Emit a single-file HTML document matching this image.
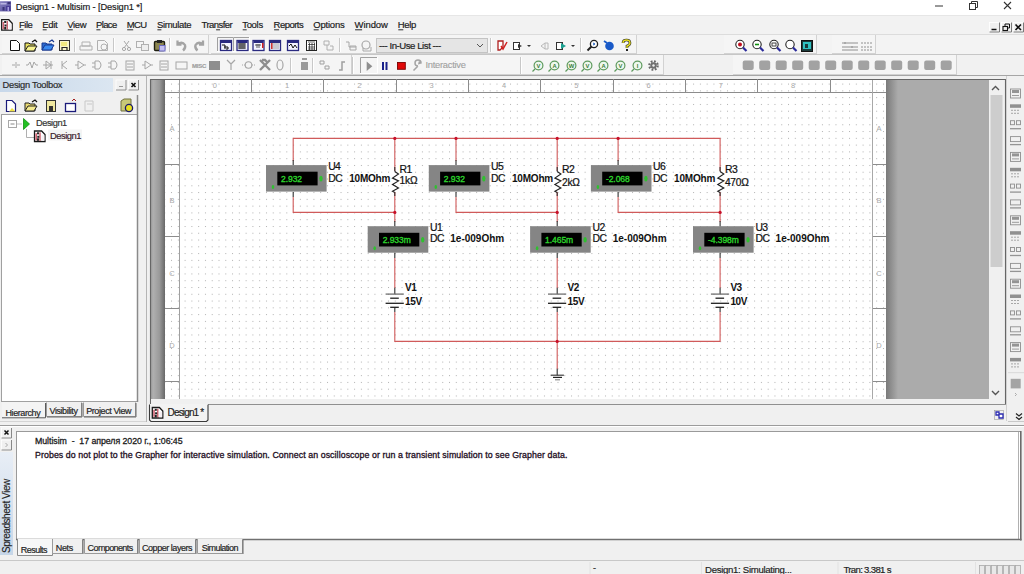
<!DOCTYPE html>
<html><head><meta charset="utf-8">
<style>
*{margin:0;padding:0}
html,body{width:1024px;height:574px;overflow:hidden;background:#f0f0f0;font-family:"Liberation Sans",sans-serif}
svg{position:absolute;left:0;top:0;display:block}
</style></head><body>
<svg width="1024" height="574" viewBox="0 0 1024 574" font-family="Liberation Sans, sans-serif">
<rect x="0" y="0" width="1024" height="574" fill="#f0f0f0" />
<rect x="0" y="0" width="1024" height="15" fill="#ffffff" />
<rect x="0" y="15" width="1024" height="1" fill="#e6e6e6" />
<rect x="0" y="16" width="1024" height="18" fill="#f2f2f2" />
<rect x="0" y="34" width="1024" height="1" fill="#dcdcdc" />
<rect x="0" y="35" width="1024" height="19" fill="#f3f3f3" />
<rect x="0" y="54" width="1024" height="1" fill="#c6c6c6" />
<rect x="0" y="55" width="1024" height="20" fill="#f1f1f1" />
<rect x="0" y="75" width="1024" height="1" fill="#a6a6a6" />
<defs><linearGradient id="ti" x1="0" y1="0" x2="1" y2="1"><stop offset="0" stop-color="#8c86c4"/><stop offset="1" stop-color="#4c4694"/></linearGradient><linearGradient id="hdr" x1="0" y1="0" x2="1" y2="0"><stop offset="0" stop-color="#c8d8ea"/><stop offset="1" stop-color="#dbe6f1"/></linearGradient><linearGradient id="sv" x1="0" y1="0" x2="0" y2="1"><stop offset="0" stop-color="#e8eef6"/><stop offset="1" stop-color="#c6d6e8"/></linearGradient><linearGradient id="cg" x1="0" y1="0" x2="1" y2="0"><stop offset="0" stop-color="#9c9c9c"/><stop offset="0.15" stop-color="#b0b0b0"/><stop offset="0.6" stop-color="#9a9a9a"/><stop offset="1" stop-color="#686868"/></linearGradient><linearGradient id="gs" x1="0" y1="0" x2="1" y2="0"><stop offset="0" stop-color="#7a7a7a"/><stop offset="1" stop-color="#ababab"/></linearGradient></defs>
<rect x="0" y="1.2" width="11" height="10.2" fill="url(#ti)" />
<rect x="0.5" y="3" width="6" height="1.5" fill="#b8b4e0" />
<rect x="7.5" y="2" width="3" height="2" fill="#3a3478" />
<rect x="6" y="6" width="4.5" height="5" fill="#4a3e98" />
<rect x="7.5" y="7" width="1.5" height="4" fill="#a8a0e0" />
<rect x="2.5" y="7" width="2" height="3.5" fill="#3a3478" />
<text x="15.8" y="10.3" font-size="9.3" fill="#1a1a1a" letter-spacing="-0.12" font-weight="normal" text-anchor="start" stroke="#1a1a1a" stroke-width="0.18" >Design1 - Multisim - [Design1 *]</text>
<line x1="935" y1="6" x2="943" y2="6" stroke="#333" stroke-width="1" />
<rect x="969.5" y="3.5" width="6" height="6" fill="none" stroke="#333" stroke-width="1"/>
<path d="M971.5 3.5 V1.5 H977.5 V7.5 H975.5" fill="none" stroke="#333" stroke-width="1"/>
<path d="M1004 2 L1011 9 M1011 2 L1004 9" stroke="#333" stroke-width="1.1"/>
<path d="M1.7 19.7 H8.8 L12.2 23.2 V30.2 H1.7 Z" fill="#fff" stroke="#1a1a1a" stroke-width="1.3"/><rect x="2.6" y="22" width="1.6" height="7" fill="#d06070"/><rect x="6.6" y="21" width="1.2" height="8.5" fill="#c04050"/><rect x="4.2" y="21" width="2" height="2" fill="#222"/><rect x="4.5" y="24.5" width="2" height="2" fill="#222"/><rect x="4.2" y="27" width="2" height="2.5" fill="#222"/><rect x="8.6" y="24" width="3" height="5.5" fill="#f6f0f4"/>
<text x="19.0" y="28.4" font-size="9.5" fill="#1a1a1a" letter-spacing="-0.5" font-weight="normal" text-anchor="start" stroke="#1a1a1a" stroke-width="0.18" >File</text>
<line x1="19.5" y1="29.8" x2="23.5" y2="29.8" stroke="#1a1a1a" stroke-width="0.9" />
<text x="42.2" y="28.4" font-size="9.5" fill="#1a1a1a" letter-spacing="-0.34" font-weight="normal" text-anchor="start" stroke="#1a1a1a" stroke-width="0.18" >Edit</text>
<line x1="42.7" y1="29.8" x2="46.7" y2="29.8" stroke="#1a1a1a" stroke-width="0.9" />
<text x="67.3" y="28.4" font-size="9.5" fill="#1a1a1a" letter-spacing="-0.4" font-weight="normal" text-anchor="start" stroke="#1a1a1a" stroke-width="0.18" >View</text>
<line x1="67.8" y1="29.8" x2="72.8" y2="29.8" stroke="#1a1a1a" stroke-width="0.9" />
<text x="95.9" y="28.4" font-size="9.5" fill="#1a1a1a" letter-spacing="-0.59" font-weight="normal" text-anchor="start" stroke="#1a1a1a" stroke-width="0.18" >Place</text>
<line x1="96.4" y1="29.8" x2="100.4" y2="29.8" stroke="#1a1a1a" stroke-width="0.9" />
<text x="126.7" y="28.4" font-size="9.5" fill="#1a1a1a" letter-spacing="-0.61" font-weight="normal" text-anchor="start" stroke="#1a1a1a" stroke-width="0.18" >MCU</text>
<line x1="127.2" y1="29.8" x2="133.2" y2="29.8" stroke="#1a1a1a" stroke-width="0.9" />
<text x="156.9" y="28.4" font-size="9.5" fill="#1a1a1a" letter-spacing="-0.32" font-weight="normal" text-anchor="start" stroke="#1a1a1a" stroke-width="0.18" >Simulate</text>
<line x1="157.4" y1="29.8" x2="161.4" y2="29.8" stroke="#1a1a1a" stroke-width="0.9" />
<text x="201.6" y="28.4" font-size="9.5" fill="#1a1a1a" letter-spacing="-0.55" font-weight="normal" text-anchor="start" stroke="#1a1a1a" stroke-width="0.18" >Transfer</text>
<line x1="216.1" y1="29.8" x2="220.1" y2="29.8" stroke="#1a1a1a" stroke-width="0.9" />
<text x="242.2" y="28.4" font-size="9.5" fill="#1a1a1a" letter-spacing="-0.31" font-weight="normal" text-anchor="start" stroke="#1a1a1a" stroke-width="0.18" >Tools</text>
<line x1="242.7" y1="29.8" x2="246.7" y2="29.8" stroke="#1a1a1a" stroke-width="0.9" />
<text x="273.6" y="28.4" font-size="9.5" fill="#1a1a1a" letter-spacing="-0.52" font-weight="normal" text-anchor="start" stroke="#1a1a1a" stroke-width="0.18" >Reports</text>
<line x1="274.1" y1="29.8" x2="279.1" y2="29.8" stroke="#1a1a1a" stroke-width="0.9" />
<text x="313.2" y="28.4" font-size="9.5" fill="#1a1a1a" letter-spacing="-0.19" font-weight="normal" text-anchor="start" stroke="#1a1a1a" stroke-width="0.18" >Options</text>
<line x1="313.7" y1="29.8" x2="318.7" y2="29.8" stroke="#1a1a1a" stroke-width="0.9" />
<text x="354.6" y="28.4" font-size="9.5" fill="#1a1a1a" letter-spacing="-0.1" font-weight="normal" text-anchor="start" stroke="#1a1a1a" stroke-width="0.18" >Window</text>
<line x1="355.1" y1="29.8" x2="362.1" y2="29.8" stroke="#1a1a1a" stroke-width="0.9" />
<text x="397.8" y="28.4" font-size="9.5" fill="#1a1a1a" letter-spacing="-0.31" font-weight="normal" text-anchor="start" stroke="#1a1a1a" stroke-width="0.18" >Help</text>
<line x1="398.3" y1="29.8" x2="403.3" y2="29.8" stroke="#1a1a1a" stroke-width="0.9" />
<rect x="989.5" y="22.5" width="10" height="9.5" fill="#f0f0f0" stroke="#fff" stroke-width="0.8"/>
<path d="M999.5 22.5 V32 H989.5" stroke="#7a7a7a" stroke-width="1" fill="none"/>
<line x1="991.5" y1="29.5" x2="996.5" y2="29.5" stroke="#111" stroke-width="1.5" />
<rect x="1001.5" y="22.5" width="10" height="9.5" fill="#f0f0f0" stroke="#fff" stroke-width="0.8"/>
<path d="M1011.5 22.5 V32 H1001.5" stroke="#7a7a7a" stroke-width="1" fill="none"/>
<path d="M1005.0 26 V24 H1009.5 V28 H1008.0" fill="none" stroke="#111" stroke-width="1"/>
<rect x="1003.0" y="26.5" width="4.5" height="4" fill="none" stroke="#111" stroke-width="1.1"/>
<rect x="1013.5" y="22.5" width="10" height="9.5" fill="#f0f0f0" stroke="#fff" stroke-width="0.8"/>
<path d="M1023.5 22.5 V32 H1013.5" stroke="#7a7a7a" stroke-width="1" fill="none"/>
<path d="M1015.5 24.5 L1021.0 30 M1021.0 24.5 L1015.5 30" stroke="#111" stroke-width="1.6"/>
<rect x="2" y="35" width="207" height="19" fill="#f5f5f5"/>
<line x1="2" y1="53.5" x2="209" y2="53.5" stroke="#d2d2d2" stroke-width="1" />
<line x1="208.5" y1="35" x2="208.5" y2="54" stroke="#d2d2d2" stroke-width="1" />
<path d="M10.5 40.5 H16.5 L19.5 43.5 V50.5 H10.5 Z" fill="#fff" stroke="#111" stroke-width="1"/>
<path d="M25 43 h4 l1 1 h5 v7 h-10 z" fill="#e8e060" stroke="#111" stroke-width="1"/><path d="M25 51 l3 -5 h9 l-3 5 z" fill="#f8f490" stroke="#222" stroke-width="1"/><path d="M32 42 l3 -2 l2 2" stroke="#111" stroke-width="1.2" fill="none"/>
<path d="M42 43 h4 l1 1 h5 v6 h-10 z" fill="#2a6ad0" stroke="#1a3a90" stroke-width="1"/><path d="M42 50 l3 -5 h9 l-3 5 z" fill="#3a8af0" stroke="#1a3a90" stroke-width="1"/><path d="M49 42 l3 -2 l2 2" stroke="#1a3a90" stroke-width="1.2" fill="none"/>
<rect x="59.5" y="40.5" width="10" height="10" fill="#f8f4c8" stroke="#333" stroke-width="1"/><rect x="61" y="42" width="6" height="4" fill="#f0e880"/><path d="M62 50.5 v-3 h5 v3" stroke="#222" stroke-width="1.2" fill="none"/>
<line x1="74.5" y1="38" x2="74.5" y2="52" stroke="#c8c8c8" stroke-width="1" />
<line x1="75.5" y1="38" x2="75.5" y2="52" stroke="#ffffff" stroke-width="1" />
<path d="M80 46 h12 v4 h-12 z M82 42 h8 v4 h-8 z" fill="none" stroke="#b0b0b0" stroke-width="1"/>
<path d="M97.5 40.5 h7 l3 3 v7 h-10 z" fill="none" stroke="#b0b0b0"/><circle cx="104" cy="47" r="3" fill="none" stroke="#b0b0b0"/>
<line x1="113.5" y1="38" x2="113.5" y2="52" stroke="#c8c8c8" stroke-width="1" />
<line x1="114.5" y1="38" x2="114.5" y2="52" stroke="#ffffff" stroke-width="1" />
<path d="M124 41 l5 7 M129 41 l-5 7" stroke="#a8a8a8" stroke-width="1"/><circle cx="124" cy="49" r="1.6" fill="none" stroke="#a8a8a8"/><circle cx="129" cy="49" r="1.6" fill="none" stroke="#a8a8a8"/>
<rect x="136.5" y="41.5" width="7" height="6" fill="none" stroke="#b0b0b0"/><rect x="141.5" y="44.5" width="7" height="6" fill="#eee" stroke="#b0b0b0"/>
<rect x="154.5" y="41.5" width="10" height="9" rx="1" fill="#8c8650" stroke="#1e1e10" stroke-width="1.4"/><rect x="157" y="40" width="5" height="3" fill="#222"/><rect x="159.5" y="45.5" width="5.5" height="5.5" fill="#c4c0f0" stroke="#6a6ac0"/>
<line x1="169.5" y1="38" x2="169.5" y2="52" stroke="#c8c8c8" stroke-width="1" />
<line x1="170.5" y1="38" x2="170.5" y2="52" stroke="#ffffff" stroke-width="1" />
<path d="M177.5 44 q5 -3 7.5 1 q1 3 -2 5.5 M177.5 40.5 v4 h4" stroke="#a4a4a4" stroke-width="2.3" fill="none"/>
<path d="M203 44 q-5 -3 -7.5 1 q-1 3 2 5.5 M203 40.5 v4 h-4" stroke="#a4a4a4" stroke-width="2.3" fill="none"/>
<rect x="211" y="35" width="426" height="19" fill="#f5f5f5"/>
<line x1="211" y1="53.5" x2="637" y2="53.5" stroke="#d2d2d2" stroke-width="1" />
<line x1="636.5" y1="35" x2="636.5" y2="54" stroke="#d2d2d2" stroke-width="1" />
<path d="M217.5 52 V37.5 H234" stroke="#a0a0a0" stroke-width="1" fill="none"/>
<path d="M233.5 37 V51.5 H217" stroke="#ffffff" stroke-width="1" fill="none"/>
<path d="M233.5 52 V37.5 H250" stroke="#a0a0a0" stroke-width="1" fill="none"/>
<path d="M249.5 37 V51.5 H233" stroke="#ffffff" stroke-width="1" fill="none"/>
<rect x="220.5" y="40.5" width="11" height="10" fill="#f4f4ff" stroke="#2a2a80" stroke-width="1.3"/>
<rect x="221" y="41" width="10" height="2" fill="#2a2a80" />
<rect x="237.0" y="40.5" width="11" height="10" fill="#f4f4ff" stroke="#2a2a80" stroke-width="1.3"/>
<rect x="237.5" y="41" width="10" height="2" fill="#2a2a80" />
<rect x="253.0" y="40.5" width="11" height="10" fill="#f4f4ff" stroke="#2a2a80" stroke-width="1.3"/>
<rect x="253.5" y="41" width="10" height="2" fill="#2a2a80" />
<rect x="269.5" y="40.5" width="11" height="10" fill="#f4f4ff" stroke="#2a2a80" stroke-width="1.3"/>
<rect x="270" y="41" width="10" height="2" fill="#2a2a80" />
<rect x="287.5" y="40.5" width="11" height="10" fill="#f4f4ff" stroke="#2a2a80" stroke-width="1.3"/>
<rect x="288" y="41" width="10" height="2" fill="#2a2a80" />
<path d="M222 45 h3 v4 M224 47 h4 v2 h-2" stroke="#111" stroke-width="1" fill="none"/>
<path d="M238 44 h8 M238 46 h8 M238 48 h8 M240 43 v6 M242 43 v6 M244 43 v6" stroke="#111" stroke-width="0.8"/>
<path d="M255 45 h6 M257 44 v4 M259 44 v4" stroke="#333" stroke-width="0.8"/><rect x="262" y="43" width="1.5" height="5" fill="#d02020"/>
<rect x="271" y="43" width="8" height="6" fill="#c8c8d0"/><rect x="271" y="43" width="1.5" height="6" fill="#d03030"/>
<path d="M289 46 l2 -2 l2 4 l2 -3 l2 3" stroke="#111" stroke-width="1" fill="none"/>
<rect x="306.5" y="40.5" width="10" height="10" fill="#fff" stroke="#222" stroke-width="1"/><path d="M308 42 h7 M308 44.5 h7 M308 47 h7 M308 49 h7 M309.5 43 v7 M312 43 v7 M314.5 43 v7" stroke="#222" stroke-width="0.7"/>
<path d="M324 41 h5 v4 h-5 z M327 45 v5 h6 v-4 h-3" fill="none" stroke="#b0b0b0" stroke-width="1"/>
<line x1="339.5" y1="38" x2="339.5" y2="52" stroke="#c8c8c8" stroke-width="1" />
<line x1="340.5" y1="38" x2="340.5" y2="52" stroke="#ffffff" stroke-width="1" />
<path d="M346 42 h3 v5 h7 M350 46 h6 v4 h-6 z" fill="none" stroke="#a8a8a8" stroke-width="1"/>
<circle cx="366" cy="45" r="4" fill="none" stroke="#a8a8a8" stroke-width="1.2"/><path d="M363 48 v3 h8 v-4" fill="none" stroke="#a8a8a8"/>
<rect x="376.5" y="38.5" width="111" height="14" fill="#e5e5e5" stroke="#c4c4c4" stroke-width="1"/>
<text x="379" y="48.6" font-size="9.6" fill="#222" letter-spacing="-0.45" font-weight="normal" text-anchor="start" stroke="#222" stroke-width="0.18" >--- In-Use List ---</text>
<path d="M477 44 l3 3 l3 -3" stroke="#555" stroke-width="1" fill="none"/>
<line x1="490.5" y1="38" x2="490.5" y2="52" stroke="#c8c8c8" stroke-width="1" />
<line x1="491.5" y1="38" x2="491.5" y2="52" stroke="#ffffff" stroke-width="1" />
<path d="M498 41 h5 v6 l-3 3 h-2 z" fill="#fff" stroke="#b02020" stroke-width="1.3"/><path d="M501 46 l2 3 l4 -7" stroke="#d02020" stroke-width="1.5" fill="none"/>
<rect x="513.5" y="42.5" width="6" height="7" fill="#fff" stroke="#333"/><path d="M518 44 l4 2 l-4 2 z" fill="#333"/><path d="M527 45 h4 l-2 2 z" fill="#333"/>
<path d="M541 46 l4 -3 v6 z M545 43 h3 v6 h-3" fill="none" stroke="#b8b8b8" stroke-width="1"/>
<rect x="556.5" y="42.5" width="6" height="7" fill="#fff" stroke="#333"/><path d="M561 43 l5 3 l-5 3 z" fill="#1aa090"/><path d="M571 45 h4 l-2 2 z" fill="#333"/>
<line x1="580.5" y1="38" x2="580.5" y2="52" stroke="#c8c8c8" stroke-width="1" />
<line x1="581.5" y1="38" x2="581.5" y2="52" stroke="#ffffff" stroke-width="1" />
<circle cx="594" cy="44" r="3.6" fill="#fff" stroke="#222" stroke-width="1.3"/><path d="M591.5 46.5 l-4 4" stroke="#222" stroke-width="2"/><path d="M593 43 l2 1 l-2 1" stroke="#2060c0" fill="none"/>
<circle cx="609.5" cy="46" r="4.3" fill="#1a5ac8"/><path d="M604 41 l3 2" stroke="#1a5ac8" stroke-width="1.8"/>
<path d="M623 43 q0 -3 3.5 -3 q3.5 0 3.5 3 q0 2 -3 3 v2" stroke="#222" stroke-width="2.6" fill="none"/><path d="M623 43 q0 -3 3.5 -3 q3.5 0 3.5 3 q0 2 -3 3 v2" stroke="#e8e020" stroke-width="1.4" fill="none"/><rect x="626" y="49" width="2" height="2" fill="#222"/>
<rect x="724" y="35" width="93" height="19" fill="#f5f5f5"/>
<line x1="724" y1="53.5" x2="817" y2="53.5" stroke="#d2d2d2" stroke-width="1" />
<line x1="816.5" y1="35" x2="816.5" y2="54" stroke="#d2d2d2" stroke-width="1" />
<circle cx="740" cy="44.5" r="4.2" fill="#fff" stroke="#222" stroke-width="1.1"/><path d="M743 47.5 l3.5 3.5" stroke="#2a2a9a" stroke-width="2.2"/>
<circle cx="740" cy="44.5" r="2" fill="#c01020"/>
<circle cx="757" cy="44.5" r="4.2" fill="#fff" stroke="#222" stroke-width="1.1"/><path d="M760 47.5 l3.5 3.5" stroke="#2a2a9a" stroke-width="2.2"/>
<line x1="755" y1="44.5" x2="759" y2="44.5" stroke="#109010" stroke-width="1.6" />
<circle cx="774" cy="44.5" r="4.2" fill="#fff" stroke="#222" stroke-width="1.1"/><path d="M777 47.5 l3.5 3.5" stroke="#2a2a9a" stroke-width="2.2"/>
<rect x="772" y="43" width="4" height="3" fill="none" stroke="#444"/>
<circle cx="790" cy="44.5" r="4.2" fill="#fff" stroke="#222" stroke-width="1.1"/><path d="M793 47.5 l3.5 3.5" stroke="#2a2a9a" stroke-width="2.2"/>
<rect x="801.5" y="40.5" width="11" height="11" fill="#1a3a3a" stroke="#111"/><rect x="803" y="42" width="8" height="7" fill="#30c0c0"/><rect x="805" y="44" width="3" height="4" fill="#1a3a3a"/>
<rect x="832" y="35" width="44" height="19" fill="#f5f5f5"/>
<line x1="832" y1="53.5" x2="876" y2="53.5" stroke="#d2d2d2" stroke-width="1" />
<line x1="875.5" y1="35" x2="875.5" y2="54" stroke="#d2d2d2" stroke-width="1" />
<path d="M842 43 h16 M842 47 h16 M842 50 h16 M845 42 v2 M852 46 v2" stroke="#909090" stroke-width="1" fill="none"/>
<path d="M861 43 h11 M861 47 h11 M861 50 h11" stroke="#909090" stroke-width="1" fill="none" stroke-dasharray="2 1"/>
<rect x="2" y="55" width="350" height="20" fill="#f5f5f5"/>
<line x1="2" y1="74.5" x2="352" y2="74.5" stroke="#d2d2d2" stroke-width="1" />
<line x1="351.5" y1="55" x2="351.5" y2="75" stroke="#d2d2d2" stroke-width="1" />
<path d="M12 65 h8 M16 62 v2 M16 66 v2" stroke="#a6a6a6" stroke-width="1" fill="none"/>
<path d="M26 65 h2 l2 -3 l2 6 l2 -6 l2 3 h2" stroke="#a6a6a6" stroke-width="1" fill="none"/>
<path d="M43 65 h10 M46 61 v8 l5 -4 z M51 61 v8" stroke="#a6a6a6" stroke-width="1" fill="none"/>
<path d="M62 61 v8 M62 65 l5 -4 M62 65 l5 4" stroke="#a6a6a6" stroke-width="1" fill="none"/>
<path d="M75 65 h3 M78 61 v8 l6 -4 z M84 65 h2" stroke="#a6a6a6" stroke-width="1" fill="none"/>
<path d="M92 63 h3 M92 67 h3 M95 61 h4 q4 4 0 8 h-4 z" stroke="#a6a6a6" stroke-width="1" fill="none"/>
<path d="M108 63 h3 M108 67 h3 M111 61 h4 q4 4 0 8 h-4 z" stroke="#a6a6a6" stroke-width="1" fill="none"/>
<rect x="126" y="61" width="8" height="9" fill="none" stroke="#a6a6a6" stroke-width="1"/><path d="M127 64 h6 M127 67 h6" stroke="#a6a6a6"/>
<path d="M142 65 h3 M145 61 v8 l6 -4 z M151 65 h2" stroke="#a6a6a6" stroke-width="1" fill="none"/>
<rect x="160" y="61" width="8" height="9" fill="none" stroke="#a6a6a6" stroke-width="1"/><path d="M161 64 h6 M161 67 h6" stroke="#a6a6a6"/>
<rect x="176" y="62" width="11" height="7" fill="none" stroke="#a6a6a6" stroke-width="1"/>

<rect x="209" y="61" width="11" height="9" fill="#8e8e8e"/>
<path d="M231 70 v-6 M231 64 l-4 -4 M231 64 l4 -4" stroke="#a6a6a6" stroke-width="1.2" fill="none"/>
<path d="M242 65 h3 M252 65 h3" stroke="#a6a6a6" stroke-dasharray="1 1"/><circle cx="248.5" cy="65" r="3.3" fill="none" stroke="#a6a6a6" stroke-width="1.1"/>
<path d="M260 60 l10 10 M270 60 l-10 10 M262 60 h3 l3 3" stroke="#8e8e8e" stroke-width="2.4" fill="none"/>
<ellipse cx="280" cy="65" rx="3" ry="5" fill="none" stroke="#a6a6a6" stroke-width="1.2"/>
<text x="192" y="67.5" font-size="6" fill="#a0a0a0" letter-spacing="-0.2" font-weight="bold" text-anchor="start" stroke="#a0a0a0" stroke-width="0.18" >MISC</text>
<line x1="290.5" y1="58" x2="290.5" y2="73" stroke="#c8c8c8" stroke-width="1" />
<line x1="291.5" y1="58" x2="291.5" y2="73" stroke="#ffffff" stroke-width="1" />
<rect x="301" y="62" width="7" height="8" fill="#9a9a9a"/><path d="M302 59 h5" stroke="#9a9a9a" stroke-width="2"/>
<line x1="312.5" y1="58" x2="312.5" y2="73" stroke="#c8c8c8" stroke-width="1" />
<line x1="313.5" y1="58" x2="313.5" y2="73" stroke="#ffffff" stroke-width="1" />
<path d="M320 61 h4 v3 h-4 z M325 66 h4 v3 h-4 z" fill="none" stroke="#a0a0a0"/><path d="M339 70 h3 v-8 h3" stroke="#a0a0a0" stroke-width="1.5" fill="none"/>
<rect x="352" y="55" width="312" height="20" fill="#f5f5f5"/>
<line x1="352" y1="74.5" x2="664" y2="74.5" stroke="#d2d2d2" stroke-width="1" />
<line x1="663.5" y1="55" x2="663.5" y2="75" stroke="#d2d2d2" stroke-width="1" />
<line x1="352.5" y1="57" x2="352.5" y2="74" stroke="#c8c8c8" stroke-width="1" />
<line x1="353.5" y1="57" x2="353.5" y2="74" stroke="#ffffff" stroke-width="1" />
<path d="M360.5 74 V57.5 H378" stroke="#a0a0a0" stroke-width="1" fill="none"/>
<path d="M377.5 57 V73.5 H360" stroke="#ffffff" stroke-width="1" fill="none"/>
<path d="M366.7 61.5 L372.3 66.3 L366.7 71.1 Z" fill="#8e8e8e"/>
<rect x="382" y="62" width="2" height="8" fill="#18208a"/><rect x="385.5" y="62" width="2" height="8" fill="#18208a"/>
<rect x="397.5" y="62.5" width="7.8" height="6.8" fill="#e00808" stroke="#7a0000" stroke-width="0.9"/>
<path d="M413.5 70.5 l4.5 -4.5 M418 66 a3 3 0 1 1 3 -3 l-2 0.5 l0.5 -2" stroke="#a4a4a4" stroke-width="1.5" fill="none"/>
<text x="425.5" y="68" font-size="9.4" fill="#a0a0a0" letter-spacing="-0.28" font-weight="normal" text-anchor="start" stroke="#a0a0a0" stroke-width="0.1" >Interactive</text>
<line x1="520.5" y1="57" x2="520.5" y2="74" stroke="#c8c8c8" stroke-width="1" />
<line x1="521.5" y1="57" x2="521.5" y2="74" stroke="#ffffff" stroke-width="1" />
<circle cx="538.5" cy="65.5" r="4.4" fill="#eef8ee" stroke="#5e9a5e" stroke-width="1.2"/><path d="M535 69 l-2.5 2.5" stroke="#5e9a5e" stroke-width="1.2"/>
<text x="538.5" y="67.8" font-size="5.8" fill="#3a7a3a" letter-spacing="0" font-weight="bold" text-anchor="middle" >V</text>
<circle cx="554.5" cy="65.5" r="4.4" fill="#eef8ee" stroke="#5e9a5e" stroke-width="1.2"/><path d="M551 69 l-2.5 2.5" stroke="#5e9a5e" stroke-width="1.2"/>
<text x="554.5" y="67.8" font-size="5.8" fill="#3a7a3a" letter-spacing="0" font-weight="bold" text-anchor="middle" >A</text>
<circle cx="571.5" cy="65.5" r="4.4" fill="#eef8ee" stroke="#5e9a5e" stroke-width="1.2"/><path d="M568 69 l-2.5 2.5" stroke="#5e9a5e" stroke-width="1.2"/>
<text x="571.5" y="67.8" font-size="5.8" fill="#3a7a3a" letter-spacing="0" font-weight="bold" text-anchor="middle" >W</text>
<circle cx="587.5" cy="65.5" r="4.4" fill="#eef8ee" stroke="#5e9a5e" stroke-width="1.2"/><path d="M584 69 l-2.5 2.5" stroke="#5e9a5e" stroke-width="1.2"/>
<text x="587.5" y="67.8" font-size="5.8" fill="#3a7a3a" letter-spacing="0" font-weight="bold" text-anchor="middle" >V</text>
<circle cx="603.5" cy="65.5" r="4.4" fill="#eef8ee" stroke="#5e9a5e" stroke-width="1.2"/><path d="M600 69 l-2.5 2.5" stroke="#5e9a5e" stroke-width="1.2"/>
<text x="603.5" y="67.8" font-size="5.8" fill="#3a7a3a" letter-spacing="0" font-weight="bold" text-anchor="middle" >A</text>
<circle cx="620.5" cy="65.5" r="4.4" fill="#eef8ee" stroke="#5e9a5e" stroke-width="1.2"/><path d="M617 69 l-2.5 2.5" stroke="#5e9a5e" stroke-width="1.2"/>
<text x="620.5" y="67.8" font-size="5.8" fill="#3a7a3a" letter-spacing="0" font-weight="bold" text-anchor="middle" >V</text>
<circle cx="637.5" cy="65.5" r="4.4" fill="#eef8ee" stroke="#5e9a5e" stroke-width="1.2"/><path d="M634 69 l-2.5 2.5" stroke="#5e9a5e" stroke-width="1.2"/>
<text x="637.5" y="67.8" font-size="5.8" fill="#3a7a3a" letter-spacing="0" font-weight="bold" text-anchor="middle" >I</text>
<circle cx="653.5" cy="65.5" r="4.2" fill="none" stroke="#6a6a6a" stroke-width="2.2" stroke-dasharray="1.8 1.5"/><circle cx="653.5" cy="65.5" r="3.2" fill="#707070"/><circle cx="653.5" cy="65.5" r="1.2" fill="#f0f0f0"/>
<rect x="733" y="55" width="224" height="20" fill="#f5f5f5"/>
<line x1="733" y1="74.5" x2="957" y2="74.5" stroke="#d2d2d2" stroke-width="1" />
<line x1="956.5" y1="55" x2="956.5" y2="75" stroke="#d2d2d2" stroke-width="1" />
<rect x="742.7" y="60.5" width="11" height="9.5" rx="2" fill="#a2a2a2"/>
<rect x="759.2" y="60.5" width="11" height="9.5" rx="2" fill="#a2a2a2"/>
<rect x="775.7" y="60.5" width="11" height="9.5" rx="2" fill="#a2a2a2"/>
<rect x="792.2" y="60.5" width="11" height="9.5" rx="2" fill="#a2a2a2"/>
<rect x="808.7" y="60.5" width="11" height="9.5" rx="2" fill="#a2a2a2"/>
<rect x="825.2" y="60.5" width="11" height="9.5" rx="2" fill="#a2a2a2"/>
<rect x="841.7" y="60.5" width="11" height="9.5" rx="2" fill="#a2a2a2"/>
<rect x="858.2" y="60.5" width="11" height="9.5" rx="2" fill="#a2a2a2"/>
<rect x="874.7" y="60.5" width="11" height="9.5" rx="2" fill="#a2a2a2"/>
<rect x="891.2" y="60.5" width="11" height="9.5" rx="2" fill="#a2a2a2"/>
<rect x="907.7" y="60.5" width="11" height="9.5" rx="2" fill="#a2a2a2"/>
<rect x="924.2" y="60.5" width="11" height="9.5" rx="2" fill="#a2a2a2"/>
<rect x="940.7" y="60.5" width="11" height="9.5" rx="2" fill="#a2a2a2"/>
<rect x="0" y="77" width="146" height="348" fill="#f0f0f0" />
<rect x="0" y="78" width="113" height="14" fill="url(#hdr)" />
<text x="2.6" y="87.8" font-size="9.3" fill="#2a2a2a" letter-spacing="-0.27" font-weight="normal" text-anchor="start" stroke="#2a2a2a" stroke-width="0.18" >Design Toolbox</text>
<rect x="116" y="80" width="10" height="10" fill="#f0f0f0" stroke="#fff" stroke-width="0.8"/><path d="M126 80 V90 H116" stroke="#888" fill="none"/>
<line x1="119" y1="86.5" x2="123" y2="86.5" stroke="#999" stroke-width="1" />
<rect x="128.5" y="80" width="10" height="10" fill="#f0f0f0" stroke="#fff" stroke-width="0.8"/><path d="M138.5 80 V90 H128.5" stroke="#888" fill="none"/>
<path d="M131.5 83 l4 4 M135.5 83 l-4 4" stroke="#111" stroke-width="1.6"/>
<path d="M6.5 100.5 H12 L15.5 104 V111.5 H6.5 Z" fill="#fff" stroke="#1a1a7a" stroke-width="1.2"/><path d="M12 108 L15.5 111.5 H9" fill="#f0e040"/>
<path d="M25 103 h4 l1 1 h5 v7 h-10 z" fill="#e8d870" stroke="#222" stroke-width="1"/><path d="M25 111 l3 -5 h9 l-3 5 z" fill="#f4ea90" stroke="#222" stroke-width="1"/><path d="M32 102 l3 -2 l2 2" stroke="#111" stroke-width="1.2" fill="none"/>
<rect x="46.5" y="100.5" width="9" height="11" fill="#f0e8a0" stroke="#333"/><rect x="49" y="106" width="4" height="5" fill="#333"/>
<rect x="65.5" y="103.5" width="10" height="8" fill="#fff" stroke="#1a1a7a" stroke-width="1.3"/><path d="M72 101 l2 -2 l2 2" stroke="#a02020" fill="none"/>
<path d="M85 101 h8 v10 h-8 z M87 104 h5" fill="none" stroke="#c8c8c8" stroke-width="1"/>
<path d="M121 101 l3 -2 h7 v9 l-3 3 h-7 z" fill="#c8c878" stroke="#707040"/><circle cx="129" cy="108" r="3.6" fill="#e8e020" stroke="#1a1a6a" stroke-width="1.3"/>
<rect x="1.5" y="114.5" width="136" height="287" fill="#fff" stroke="#a0a0a0" stroke-width="1"/>
<line x1="137.5" y1="95" x2="137.5" y2="402" stroke="#8a8a8a" stroke-width="1.5" />
<rect x="8.5" y="120.5" width="8" height="7" fill="#fff" stroke="#a8a8a8"/><path d="M10.5 124 h4" stroke="#888"/>
<line x1="17" y1="124" x2="22" y2="124" stroke="#c0c0c0" stroke-width="1" />
<path d="M23.5 118.5 L29.5 124 L23.5 129.5 Z" fill="#22c022" stroke="#109010" stroke-width="0.8"/>
<text x="36" y="126.2" font-size="9.2" fill="#333" letter-spacing="-0.42" font-weight="normal" text-anchor="start" stroke="#333" stroke-width="0.18" >Design1</text>
<path d="M26.5 129 V137.5 H34" stroke="#b0b0b0" fill="none"/>
<g transform="translate(34.5 131) scale(1.0) translate(-1.7 -19.7)"><path d="M1.7 19.7 H8.8 L12.2 23.2 V30.2 H1.7 Z" fill="#fff" stroke="#1a1a1a" stroke-width="1.3"/><rect x="2.6" y="22" width="1.6" height="7" fill="#d06070"/><rect x="6.6" y="21" width="1.2" height="8.5" fill="#c04050"/><rect x="4.2" y="21" width="2" height="2" fill="#222"/><rect x="4.5" y="24.5" width="2" height="2" fill="#222"/><rect x="4.2" y="27" width="2" height="2.5" fill="#222"/><rect x="8.6" y="24" width="3" height="5.5" fill="#f6f0f4"/></g>
<rect x="48" y="129.5" width="34" height="11" fill="#f4f4f4" />
<text x="50" y="139.3" font-size="9.4" fill="#3a1a2a" letter-spacing="-0.5" font-weight="normal" text-anchor="start" stroke="#3a1a2a" stroke-width="0.18" >Design1</text>
<rect x="2" y="402" width="43.5" height="15.5" fill="#f4f4f4"/><path d="M2 417.8 H45.5 V403" stroke="#5a5a5a" stroke-width="1" fill="none"/>
<text x="5.5" y="416" font-size="9" fill="#222" letter-spacing="-0.42" font-weight="normal" text-anchor="start" stroke="#222" stroke-width="0.18" >Hierarchy</text>
<path d="M46.5 402.5 V416.5 H81.5 V402.5" fill="#f0f0f0" stroke="#9a9a9a"/><path d="M82 403 V417 H47" stroke="#6a6a6a" fill="none"/>
<text x="49.5" y="413.6" font-size="9" fill="#222" letter-spacing="-0.44" font-weight="normal" text-anchor="start" stroke="#222" stroke-width="0.18" >Visibility</text>
<path d="M83.5 402.5 V416.5 H135.5 V402.5" fill="#f0f0f0" stroke="#9a9a9a"/><path d="M136 403 V417 H84" stroke="#6a6a6a" fill="none"/>
<text x="86.2" y="413.6" font-size="9" fill="#222" letter-spacing="-0.41" font-weight="normal" text-anchor="start" stroke="#222" stroke-width="0.18" >Project View</text>
<line x1="146.5" y1="76" x2="146.5" y2="422" stroke="#b4b4b4" stroke-width="1" />
<rect x="150" y="78" width="856" height="327" fill="#f0f0f0" />
<line x1="150" y1="404.5" x2="1006" y2="404.5" stroke="#dcdcdc" stroke-width="1" />
<rect x="151" y="80" width="14" height="319" fill="url(#cg)" />
<rect x="165" y="80" width="721" height="319" fill="#fff" />
<rect x="886" y="80" width="103" height="319" fill="#ababab" />
<rect x="886" y="80" width="12" height="319" fill="url(#gs)" />
<rect x="989" y="80" width="15" height="319" fill="#f0f0f0" />
<path d="M150.5 405 V79.5 H1005.5 V405" fill="none" stroke="#666" stroke-width="1.1"/>
<rect x="990.5" y="95" width="12" height="172" fill="#cdcdcd" />
<path d="M992 90 l3.5 -3.5 l3.5 3.5" stroke="#555" stroke-width="1.4" fill="none"/>
<path d="M992 391 l3.5 3.5 l3.5 -3.5" stroke="#555" stroke-width="1.4" fill="none"/>
<rect x="151" y="399" width="838" height="5" fill="#f0f0f0" />
<rect x="1006" y="76" width="18" height="346" fill="#f0f0f0" />
<line x1="1006.5" y1="76" x2="1006.5" y2="421" stroke="#d0d0d0" stroke-width="1" />
<rect x="1010.5" y="89.0" width="10" height="9" fill="none" stroke="#8e8e8e" stroke-width="0.9"/><rect x="1012" y="90.0" width="7" height="3" fill="#949494"/><path d="M1012 95.5 h7" stroke="#9c9c9c"/>
<rect x="1010" y="104.3" width="11" height="3.5" fill="#909090"/><path d="M1011 110.3 h9 M1011 113.3 h9" stroke="#9e9e9e" stroke-width="0.9" stroke-dasharray="2 1"/>
<rect x="1010.5" y="120.7" width="4" height="4" fill="none" stroke="#8e8e8e" stroke-width="0.9"/><rect x="1016.5" y="120.7" width="4" height="4" fill="none" stroke="#8e8e8e" stroke-width="0.9"/><path d="M1010 128.7 h11" stroke="#949494" stroke-width="1.3"/>
<rect x="1010.5" y="136.6" width="10" height="5" fill="none" stroke="#909090" stroke-width="0.9"/><path d="M1010 144.6 h11" stroke="#949494" stroke-width="1.3"/>
<rect x="1010.5" y="152.4" width="10" height="9" fill="none" stroke="#8e8e8e" stroke-width="0.9"/><rect x="1012" y="153.4" width="7" height="3" fill="#949494"/><path d="M1012 158.9 h7" stroke="#9c9c9c"/>
<rect x="1010" y="167.8" width="11" height="3.5" fill="#909090"/><path d="M1011 173.8 h9 M1011 176.8 h9" stroke="#9e9e9e" stroke-width="0.9" stroke-dasharray="2 1"/>
<rect x="1010.5" y="184.1" width="4" height="4" fill="none" stroke="#8e8e8e" stroke-width="0.9"/><rect x="1016.5" y="184.1" width="4" height="4" fill="none" stroke="#8e8e8e" stroke-width="0.9"/><path d="M1010 192.1 h11" stroke="#949494" stroke-width="1.3"/>
<rect x="1010.5" y="199.9" width="10" height="5" fill="none" stroke="#909090" stroke-width="0.9"/><path d="M1010 207.9 h11" stroke="#949494" stroke-width="1.3"/>
<rect x="1010.5" y="215.8" width="10" height="9" fill="none" stroke="#8e8e8e" stroke-width="0.9"/><rect x="1012" y="216.8" width="7" height="3" fill="#949494"/><path d="M1012 222.3 h7" stroke="#9c9c9c"/>
<rect x="1010" y="231.2" width="11" height="3.5" fill="#909090"/><path d="M1011 237.2 h9 M1011 240.2 h9" stroke="#9e9e9e" stroke-width="0.9" stroke-dasharray="2 1"/>
<rect x="1010.5" y="247.5" width="4" height="4" fill="none" stroke="#8e8e8e" stroke-width="0.9"/><rect x="1016.5" y="247.5" width="4" height="4" fill="none" stroke="#8e8e8e" stroke-width="0.9"/><path d="M1010 255.5 h11" stroke="#949494" stroke-width="1.3"/>
<rect x="1010.5" y="263.4" width="10" height="5" fill="none" stroke="#909090" stroke-width="0.9"/><path d="M1010 271.4 h11" stroke="#949494" stroke-width="1.3"/>
<rect x="1010.5" y="279.2" width="10" height="9" fill="none" stroke="#8e8e8e" stroke-width="0.9"/><rect x="1012" y="280.2" width="7" height="3" fill="#949494"/><path d="M1012 285.7 h7" stroke="#9c9c9c"/>
<rect x="1010" y="294.5" width="11" height="3.5" fill="#909090"/><path d="M1011 300.5 h9 M1011 303.5 h9" stroke="#9e9e9e" stroke-width="0.9" stroke-dasharray="2 1"/>
<rect x="1010.5" y="310.9" width="4" height="4" fill="none" stroke="#8e8e8e" stroke-width="0.9"/><rect x="1016.5" y="310.9" width="4" height="4" fill="none" stroke="#8e8e8e" stroke-width="0.9"/><path d="M1010 318.9 h11" stroke="#949494" stroke-width="1.3"/>
<rect x="1010.5" y="326.8" width="10" height="5" fill="none" stroke="#909090" stroke-width="0.9"/><path d="M1010 334.8 h11" stroke="#949494" stroke-width="1.3"/>
<rect x="1010.5" y="342.6" width="10" height="9" fill="none" stroke="#8e8e8e" stroke-width="0.9"/><rect x="1012" y="343.6" width="7" height="3" fill="#949494"/><path d="M1012 349.1 h7" stroke="#9c9c9c"/>
<rect x="1010" y="357.9" width="11" height="3.5" fill="#909090"/><path d="M1011 363.9 h9 M1011 366.9 h9" stroke="#9e9e9e" stroke-width="0.9" stroke-dasharray="2 1"/>
<line x1="1008" y1="372.7" x2="1024" y2="372.7" stroke="#d8d8d8" stroke-width="1" />
<rect x="1010.7" y="378.8" width="10" height="9.6" fill="#a4a4a4" />
<path d="M1015 393 l1.5 1.5 l-1.5 1.5" stroke="#999" fill="none" stroke-width="0.8"/>
<line x1="1008" y1="421.5" x2="1024" y2="421.5" stroke="#c8c8c8" stroke-width="1" />
<defs><pattern id="g" patternUnits="userSpaceOnUse" x="184.6" y="83.6" width="6.78" height="6.78"><rect x="0" y="0" width="1" height="1" fill="#b0b0b0"/></pattern></defs>
<rect x="165" y="80" width="721" height="319" fill="url(#g)"/>
<g stroke="#8c8c8c" stroke-width="1" shape-rendering="crispEdges">
<line x1="165" y1="92.5" x2="886" y2="92.5"/>
<line x1="179.5" y1="80" x2="179.5" y2="399" stroke="#a0a0a0"/>
<line x1="872.5" y1="80" x2="872.5" y2="399" stroke="#a8a8a8"/>
<line x1="251.6" y1="79" x2="251.6" y2="92"/>
<line x1="323.9" y1="79" x2="323.9" y2="92"/>
<line x1="396.2" y1="79" x2="396.2" y2="92"/>
<line x1="468.5" y1="79" x2="468.5" y2="92"/>
<line x1="540.8" y1="79" x2="540.8" y2="92"/>
<line x1="613.1" y1="79" x2="613.1" y2="92"/>
<line x1="685.4" y1="79" x2="685.4" y2="92"/>
<line x1="757.7" y1="79" x2="757.7" y2="92"/>
<line x1="830.0" y1="79" x2="830.0" y2="92"/>
<line x1="165" y1="164.1" x2="179" y2="164.1"/>
<line x1="873" y1="164.1" x2="886" y2="164.1"/>
<line x1="165" y1="236.4" x2="179" y2="236.4"/>
<line x1="873" y1="236.4" x2="886" y2="236.4"/>
<line x1="165" y1="308.7" x2="179" y2="308.7"/>
<line x1="873" y1="308.7" x2="886" y2="308.7"/>
<line x1="165" y1="381.0" x2="179" y2="381.0"/>
<line x1="873" y1="381.0" x2="886" y2="381.0"/>
</g>
<g fill="#a8a8a8" font-size="7.5" text-anchor="middle">
<text x="214.8" y="87.5">0</text>
<text x="287.1" y="87.5">1</text>
<text x="359.4" y="87.5">2</text>
<text x="431.7" y="87.5">3</text>
<text x="504.0" y="87.5">4</text>
<text x="576.3" y="87.5">5</text>
<text x="648.6" y="87.5">6</text>
<text x="720.9" y="87.5">7</text>
<text x="793.2" y="87.5">8</text>
<text x="172" y="131.0">A</text>
<text x="879" y="131.0">A</text>
<text x="172" y="203.3">B</text>
<text x="879" y="203.3">B</text>
<text x="172" y="275.6">C</text>
<text x="879" y="275.6">C</text>
<text x="172" y="347.9">D</text>
<text x="879" y="347.9">D</text>
</g>
<g stroke="#d05a5a" stroke-width="1.1" fill="none">
<path d="M293.2 161 V138.4 H720.1 V171"/>
<path d="M293.2 197 V212.4 H394.8 V192"/>
<path d="M456 161 V138.4"/>
<path d="M456 197 V212.4 H557.2 V192"/>
<path d="M618.1 161 V138.4"/>
<path d="M618.1 197 V212.4 H720.1 V192"/>
<path d="M394.8 171 V138.4"/>
<path d="M557.2 171 V138.4"/>
<path d="M394.8 212.4 V222"/>
<path d="M394.8 258 V288"/>
<path d="M557.2 212.4 V222"/>
<path d="M557.2 258 V288"/>
<path d="M720.1 212.4 V222"/>
<path d="M720.1 258 V288"/>
<path d="M394.8 312 V341.4 H720.1 V312"/>
<path d="M557.2 312 V341.4 V369"/>
</g>
<g stroke="#303030" stroke-width="1.1">
<line x1="293.2" y1="160" x2="293.2" y2="165"/>
<line x1="293.2" y1="192" x2="293.2" y2="197"/>
<line x1="456" y1="160" x2="456" y2="165"/>
<line x1="456" y1="192" x2="456" y2="197"/>
<line x1="618.1" y1="160" x2="618.1" y2="165"/>
<line x1="618.1" y1="192" x2="618.1" y2="197"/>
<line x1="394.8" y1="167" x2="394.8" y2="171.6"/>
<line x1="394.8" y1="192.4" x2="394.8" y2="196"/>
<line x1="394.8" y1="221" x2="394.8" y2="226.5"/>
<line x1="394.8" y1="252.5" x2="394.8" y2="258"/>
<line x1="394.8" y1="287.8" x2="394.8" y2="294"/>
<line x1="394.8" y1="307.3" x2="394.8" y2="312"/>
<line x1="557.2" y1="167" x2="557.2" y2="171.6"/>
<line x1="557.2" y1="192.4" x2="557.2" y2="196"/>
<line x1="557.2" y1="221" x2="557.2" y2="226.5"/>
<line x1="557.2" y1="252.5" x2="557.2" y2="258"/>
<line x1="557.2" y1="287.8" x2="557.2" y2="294"/>
<line x1="557.2" y1="307.3" x2="557.2" y2="312"/>
<line x1="720.1" y1="167" x2="720.1" y2="171.6"/>
<line x1="720.1" y1="192.4" x2="720.1" y2="196"/>
<line x1="720.1" y1="221" x2="720.1" y2="226.5"/>
<line x1="720.1" y1="252.5" x2="720.1" y2="258"/>
<line x1="720.1" y1="287.8" x2="720.1" y2="294"/>
<line x1="720.1" y1="307.3" x2="720.1" y2="312"/>
<line x1="557.2" y1="368.8" x2="557.2" y2="375.2"/>
</g>
<g fill="#c8102a">
<circle cx="394.8" cy="138.4" r="1.6"/>
<circle cx="456" cy="138.4" r="1.6"/>
<circle cx="557.2" cy="138.4" r="1.6"/>
<circle cx="618.1" cy="138.4" r="1.6"/>
<circle cx="394.8" cy="212.4" r="1.6"/>
<circle cx="557.2" cy="212.4" r="1.6"/>
<circle cx="720.1" cy="212.4" r="1.6"/>
<circle cx="557.2" cy="341.4" r="1.6"/>
</g>
<path d="M394.8 171.5 L398.5 173.9 L392.5 178.1 L398.5 180.9 L392.5 184.4 L398.5 187.9 L392.5 191.3 L394.8 192.5" stroke="#202020" stroke-width="1.15" fill="none"/>
<path d="M557.2 171.5 L560.9 173.9 L554.9 178.1 L560.9 180.9 L554.9 184.4 L560.9 187.9 L554.9 191.3 L557.2 192.5" stroke="#202020" stroke-width="1.15" fill="none"/>
<path d="M720.1 171.5 L723.8 173.9 L717.8 178.1 L723.8 180.9 L717.8 184.4 L723.8 187.9 L717.8 191.3 L720.1 192.5" stroke="#202020" stroke-width="1.15" fill="none"/>
<g stroke-width="1.3"><line x1="385.6" y1="294.1" x2="403.8" y2="294.1" stroke="#707070"/>
<line x1="390.2" y1="298.2" x2="398.8" y2="298.2" stroke="#202020"/>
<line x1="385.6" y1="303.3" x2="403.8" y2="303.3" stroke="#202020"/>
<line x1="390.2" y1="307.3" x2="398.8" y2="307.3" stroke="#202020"/></g>
<g stroke-width="1.3"><line x1="548.0" y1="294.1" x2="566.2" y2="294.1" stroke="#707070"/>
<line x1="552.6" y1="298.2" x2="561.2" y2="298.2" stroke="#202020"/>
<line x1="548.0" y1="303.3" x2="566.2" y2="303.3" stroke="#202020"/>
<line x1="552.6" y1="307.3" x2="561.2" y2="307.3" stroke="#202020"/></g>
<g stroke-width="1.3"><line x1="710.9" y1="294.1" x2="729.1" y2="294.1" stroke="#707070"/>
<line x1="715.5" y1="298.2" x2="724.1" y2="298.2" stroke="#202020"/>
<line x1="710.9" y1="303.3" x2="729.1" y2="303.3" stroke="#202020"/>
<line x1="715.5" y1="307.3" x2="724.1" y2="307.3" stroke="#202020"/></g>
<g stroke-width="1.2"><line x1="550.7" y1="375.2" x2="563.9" y2="375.2" stroke="#404040"/><line x1="553" y1="377.4" x2="562" y2="377.4" stroke="#202020"/><line x1="555" y1="379.8" x2="560" y2="379.8" stroke="#909090"/></g>
<rect x="266.0" y="165.1" width="60.6" height="26.5" fill="#858585"/><rect x="277.3" y="171.7" width="40.3" height="13.7" fill="#000"/><text x="281.0" y="181.9" fill="#2cd42c" stroke="#2cd42c" stroke-width="0.35" font-size="8.5" letter-spacing="-0.05">2.932</text><ellipse cx="321.0" cy="178.6" rx="1.7" ry="2.8" fill="#30c030"/><ellipse cx="273.0" cy="187.1" rx="1.3" ry="2" fill="#30c030"/>
<rect x="428.8" y="165.1" width="60.6" height="26.5" fill="#858585"/><rect x="440.1" y="171.7" width="40.3" height="13.7" fill="#000"/><text x="443.8" y="181.9" fill="#2cd42c" stroke="#2cd42c" stroke-width="0.35" font-size="8.5" letter-spacing="-0.05">2.932</text><ellipse cx="483.8" cy="178.6" rx="1.7" ry="2.8" fill="#30c030"/><ellipse cx="435.8" cy="187.1" rx="1.3" ry="2" fill="#30c030"/>
<rect x="590.9" y="165.1" width="60.6" height="26.5" fill="#858585"/><rect x="602.1999999999999" y="171.7" width="40.3" height="13.7" fill="#000"/><text x="605.9" y="181.9" fill="#2cd42c" stroke="#2cd42c" stroke-width="0.35" font-size="8.5" letter-spacing="-0.05">-2.068</text><ellipse cx="645.9" cy="178.6" rx="1.7" ry="2.8" fill="#30c030"/><ellipse cx="597.9" cy="187.1" rx="1.3" ry="2" fill="#30c030"/>
<rect x="367.7" y="226.2" width="60.6" height="26.5" fill="#858585"/><rect x="379.0" y="232.79999999999998" width="40.3" height="13.7" fill="#000"/><text x="382.7" y="243.0" fill="#2cd42c" stroke="#2cd42c" stroke-width="0.35" font-size="8.5" letter-spacing="-0.05">2.933m</text><ellipse cx="422.7" cy="239.7" rx="1.7" ry="2.8" fill="#30c030"/><ellipse cx="374.7" cy="248.2" rx="1.3" ry="2" fill="#30c030"/>
<rect x="530.1" y="226.2" width="60.6" height="26.5" fill="#858585"/><rect x="541.4" y="232.79999999999998" width="40.3" height="13.7" fill="#000"/><text x="545.1" y="243.0" fill="#2cd42c" stroke="#2cd42c" stroke-width="0.35" font-size="8.5" letter-spacing="-0.05">1.465m</text><ellipse cx="585.1" cy="239.7" rx="1.7" ry="2.8" fill="#30c030"/><ellipse cx="537.1" cy="248.2" rx="1.3" ry="2" fill="#30c030"/>
<rect x="693.0" y="226.2" width="60.6" height="26.5" fill="#858585"/><rect x="704.3" y="232.79999999999998" width="40.3" height="13.7" fill="#000"/><text x="708.0" y="243.0" fill="#2cd42c" stroke="#2cd42c" stroke-width="0.35" font-size="8.5" letter-spacing="-0.05">-4.398m</text><ellipse cx="748.0" cy="239.7" rx="1.7" ry="2.8" fill="#30c030"/><ellipse cx="700.0" cy="248.2" rx="1.3" ry="2" fill="#30c030"/>
<g fill="#111">
<text x="328.2" y="169.5" font-size="10.4" letter-spacing="-0.6" stroke="#111" stroke-width="0.22">U4</text>
<text x="328.2" y="181.9" font-size="10.4" letter-spacing="-0.5" stroke="#111" stroke-width="0.22">DC</text>
<text x="349.2" y="181.5" font-size="10" font-weight="bold" letter-spacing="-0.2">10MOhm</text>
<text x="399.6" y="172.5" font-size="10.4" letter-spacing="-0.5" stroke="#111" stroke-width="0.22">R1</text>
<text x="399.6" y="184.2" font-size="10.2" letter-spacing="-0.2" stroke="#111" stroke-width="0.22">1kΩ</text>
<text x="491" y="169.5" font-size="10.4" letter-spacing="-0.6" stroke="#111" stroke-width="0.22">U5</text>
<text x="491" y="181.9" font-size="10.4" letter-spacing="-0.5" stroke="#111" stroke-width="0.22">DC</text>
<text x="512" y="181.5" font-size="10" font-weight="bold" letter-spacing="-0.2">10MOhm</text>
<text x="562.0" y="172.5" font-size="10.4" letter-spacing="-0.5" stroke="#111" stroke-width="0.22">R2</text>
<text x="562.0" y="185.7" font-size="10.2" letter-spacing="-0.2" stroke="#111" stroke-width="0.22">2kΩ</text>
<text x="653.1" y="169.5" font-size="10.4" letter-spacing="-0.6" stroke="#111" stroke-width="0.22">U6</text>
<text x="653.1" y="181.9" font-size="10.4" letter-spacing="-0.5" stroke="#111" stroke-width="0.22">DC</text>
<text x="674.1" y="181.5" font-size="10" font-weight="bold" letter-spacing="-0.2">10MOhm</text>
<text x="724.9" y="172.5" font-size="10.4" letter-spacing="-0.5" stroke="#111" stroke-width="0.22">R3</text>
<text x="724.9" y="185.6" font-size="10.2" letter-spacing="-0.2" stroke="#111" stroke-width="0.22">470Ω</text>
<text x="430.1" y="230.5" font-size="10.4" letter-spacing="-0.6" stroke="#111" stroke-width="0.22">U1</text>
<text x="430.1" y="242.3" font-size="10.4" letter-spacing="-0.5" stroke="#111" stroke-width="0.22">DC</text>
<text x="450.3" y="242.4" font-size="10" font-weight="bold" letter-spacing="0">1e-009Ohm</text>
<text x="405.1" y="291" font-size="10" font-weight="bold" letter-spacing="-0.45">V1</text>
<text x="405.1" y="304.6" font-size="10" font-weight="bold" letter-spacing="-0.35">15V</text>
<text x="592.5" y="230.5" font-size="10.4" letter-spacing="-0.6" stroke="#111" stroke-width="0.22">U2</text>
<text x="592.5" y="242.3" font-size="10.4" letter-spacing="-0.5" stroke="#111" stroke-width="0.22">DC</text>
<text x="612.7" y="242.4" font-size="10" font-weight="bold" letter-spacing="0">1e-009Ohm</text>
<text x="567.5" y="291" font-size="10" font-weight="bold" letter-spacing="-0.45">V2</text>
<text x="567.5" y="304.6" font-size="10" font-weight="bold" letter-spacing="-0.35">15V</text>
<text x="755.4" y="230.5" font-size="10.4" letter-spacing="-0.6" stroke="#111" stroke-width="0.22">U3</text>
<text x="755.4" y="242.3" font-size="10.4" letter-spacing="-0.5" stroke="#111" stroke-width="0.22">DC</text>
<text x="775.6" y="242.4" font-size="10" font-weight="bold" letter-spacing="0">1e-009Ohm</text>
<text x="730.4" y="291" font-size="10" font-weight="bold" letter-spacing="-0.45">V3</text>
<text x="730.4" y="304.6" font-size="10" font-weight="bold" letter-spacing="-0.35">10V</text>
</g>
<rect x="147" y="405" width="859" height="17" fill="#f0f0f0" />
<line x1="146.5" y1="400" x2="146.5" y2="422" stroke="#b4b4b4" stroke-width="1" />
<line x1="208" y1="404.5" x2="1006" y2="404.5" stroke="#909090" stroke-width="1" />
<path d="M149.5 404.5 V420 l1.5 1.5 H206.5 l1.5 -1.5 V404.5" fill="#f3f3f3" stroke="#3a3a3a" stroke-width="1.1"/>
<line x1="150" y1="404.5" x2="207.5" y2="404.5" stroke="#f3f3f3" stroke-width="1.2" />
<g transform="translate(152.3 407.5) scale(1.0) translate(-1.7 -19.7)"><path d="M1.7 19.7 H8.8 L12.2 23.2 V30.2 H1.7 Z" fill="#fff" stroke="#1a1a1a" stroke-width="1.3"/><rect x="2.6" y="22" width="1.6" height="7" fill="#d06070"/><rect x="6.6" y="21" width="1.2" height="8.5" fill="#c04050"/><rect x="4.2" y="21" width="2" height="2" fill="#222"/><rect x="4.5" y="24.5" width="2" height="2" fill="#222"/><rect x="4.2" y="27" width="2" height="2.5" fill="#222"/><rect x="8.6" y="24" width="3" height="5.5" fill="#f6f0f4"/></g>
<text x="167.6" y="416.3" font-size="10" fill="#222" letter-spacing="-0.85" font-weight="normal" text-anchor="start" stroke="#222" stroke-width="0.18" >Design1 *</text>
<rect x="994.5" y="410.5" width="9" height="9" fill="#f0f0f0" stroke="#9a9a9a" stroke-width="0.6"/><path d="M996 412 h3 v3 h-3 z M999 414 h4 v4 h-4 z" fill="#fff" stroke="#2a2ab0" stroke-width="1.3"/>
<path d="M1016 413.5 l3 2.5 l3 -2.5 M1016 417 l3 2.5 l3 -2.5" stroke="#222" stroke-width="1.2" fill="none"/>
<line x1="0" y1="421.5" x2="146" y2="421.5" stroke="#d4d4d4" stroke-width="1" />
<line x1="0" y1="425.5" x2="1024" y2="425.5" stroke="#9c9c9c" stroke-width="1" />
<rect x="0" y="426" width="1024" height="135" fill="#f0f0f0" />
<line x1="0" y1="426.5" x2="1024" y2="426.5" stroke="#ffffff" stroke-width="1" />
<rect x="0" y="452" width="13" height="103" fill="url(#sv)" />
<rect x="1.5" y="428" width="10" height="10" fill="#f0f0f0" stroke="#fff" stroke-width="0.8"/><path d="M11.5 428 V438 H1.5" stroke="#888" fill="none"/>
<rect x="1.5" y="440" width="10" height="10" fill="#f0f0f0" stroke="#fff" stroke-width="0.8"/><path d="M11.5 440 V450 H1.5" stroke="#888" fill="none"/>
<path d="M4.5 430.5 l4 4 M8.5 430.5 l-4 4" stroke="#111" stroke-width="1.5"/>
<path d="M5.5 443 l2 2 l-2 2" stroke="#aaa" fill="none"/>
<text x="0" y="0" font-size="10" fill="#222" stroke="#222" stroke-width="0.15" letter-spacing="-0.45" transform="translate(10.3 553) rotate(-90)">Spreadsheet View</text>
<rect x="16.5" y="431.5" width="1004" height="108" fill="#fff" stroke="#9a9a9a" stroke-width="1"/>
<line x1="1018.5" y1="432" x2="1018.5" y2="539" stroke="#b0b0b0" stroke-width="1" />
<line x1="1020.8" y1="431" x2="1020.8" y2="540.5" stroke="#6a6a6a" stroke-width="1.6" />
<line x1="16" y1="539.5" x2="1021.5" y2="539.5" stroke="#707070" stroke-width="1.6" />
<text x="35" y="443.8" font-size="8.8" fill="#1a1a1a" letter-spacing="-0.05" font-weight="normal" text-anchor="start" stroke="#1a1a1a" stroke-width="0.28" >Multisim&#160; -&#160; 17 апреля 2020 г., 1:06:45</text>
<text x="35" y="457.9" font-size="8.8" fill="#1e0e1e" letter-spacing="0.075" font-weight="normal" text-anchor="start" stroke="#1e0e1e" stroke-width="0.3" >Probes do not plot to the Grapher for interactive simulation. Connect an oscilloscope or run a transient simulation to see Grapher data.</text>
<path d="M17.5 539 V555.5 H52.5 V539" fill="#f7f7f7" stroke="#8a8a8a" stroke-width="1"/>
<text x="20.8" y="553" font-size="9" fill="#222" letter-spacing="-0.54" font-weight="normal" text-anchor="start" stroke="#222" stroke-width="0.18" >Results</text>
<path d="M52.5 539 V553.5 H82.5 V539" fill="#f0f0f0" stroke="#9a9a9a" stroke-width="1"/>
<line x1="83.0" y1="540" x2="83.0" y2="554" stroke="#6a6a6a" stroke-width="1" />
<text x="55.8" y="550.5" font-size="9" fill="#222" letter-spacing="-0.37" font-weight="normal" text-anchor="start" stroke="#222" stroke-width="0.18" >Nets</text>
<path d="M84.5 539 V553.5 H137.5 V539" fill="#f0f0f0" stroke="#9a9a9a" stroke-width="1"/>
<line x1="138.0" y1="540" x2="138.0" y2="554" stroke="#6a6a6a" stroke-width="1" />
<text x="87.6" y="550.5" font-size="9" fill="#222" letter-spacing="-0.61" font-weight="normal" text-anchor="start" stroke="#222" stroke-width="0.18" >Components</text>
<path d="M139.5 539 V553.5 H195.5 V539" fill="#f0f0f0" stroke="#9a9a9a" stroke-width="1"/>
<line x1="196.0" y1="540" x2="196.0" y2="554" stroke="#6a6a6a" stroke-width="1" />
<text x="142" y="550.5" font-size="9" fill="#222" letter-spacing="-0.46" font-weight="normal" text-anchor="start" stroke="#222" stroke-width="0.18" >Copper layers</text>
<path d="M197.5 539 V553.5 H242.5 V539" fill="#f0f0f0" stroke="#9a9a9a" stroke-width="1"/>
<line x1="243.0" y1="540" x2="243.0" y2="554" stroke="#6a6a6a" stroke-width="1" />
<text x="201.8" y="550.5" font-size="9" fill="#222" letter-spacing="-0.6" font-weight="normal" text-anchor="start" stroke="#222" stroke-width="0.18" >Simulation</text>
<line x1="0" y1="560.5" x2="1024" y2="560.5" stroke="#c8c8c8" stroke-width="1" />
<rect x="0" y="561" width="1024" height="13" fill="#f0f0f0" />
<line x1="590" y1="562" x2="590" y2="574" stroke="#e2e2e2" stroke-width="1" />
<line x1="701.5" y1="562" x2="701.5" y2="574" stroke="#e2e2e2" stroke-width="1" />
<line x1="838" y1="562" x2="838" y2="574" stroke="#e2e2e2" stroke-width="1" />
<line x1="975.5" y1="562" x2="975.5" y2="574" stroke="#e2e2e2" stroke-width="1" />
<text x="593" y="571" font-size="9" fill="#333" letter-spacing="0" font-weight="normal" text-anchor="start" stroke="#333" stroke-width="0.18" >-</text>
<text x="705" y="573" font-size="9.6" fill="#222" letter-spacing="-0.3" font-weight="normal" text-anchor="start" stroke="#222" stroke-width="0.18" >Design1: Simulating...</text>
<text x="843.5" y="573" font-size="9.6" fill="#222" letter-spacing="-0.68" font-weight="normal" text-anchor="start" stroke="#222" stroke-width="0.18" >Tran: 3.381 s</text>
<rect x="979.5" y="565.5" width="5" height="9" fill="#e8e8e8" stroke="#a8a8a8" stroke-width="0.8"/>
<rect x="985.5" y="565.5" width="5" height="9" fill="#e8e8e8" stroke="#a8a8a8" stroke-width="0.8"/>
<rect x="991.5" y="565.5" width="5" height="9" fill="#e8e8e8" stroke="#a8a8a8" stroke-width="0.8"/>
<rect x="997.5" y="565.5" width="5" height="9" fill="#e8e8e8" stroke="#a8a8a8" stroke-width="0.8"/>
<rect x="1003.5" y="565.5" width="5" height="9" fill="#e8e8e8" stroke="#a8a8a8" stroke-width="0.8"/>
<rect x="1009.5" y="565.5" width="5" height="9" fill="#e8e8e8" stroke="#a8a8a8" stroke-width="0.8"/>
<rect x="1015.5" y="565.5" width="5" height="9" fill="#e8e8e8" stroke="#a8a8a8" stroke-width="0.8"/>
</svg>
</body></html>
